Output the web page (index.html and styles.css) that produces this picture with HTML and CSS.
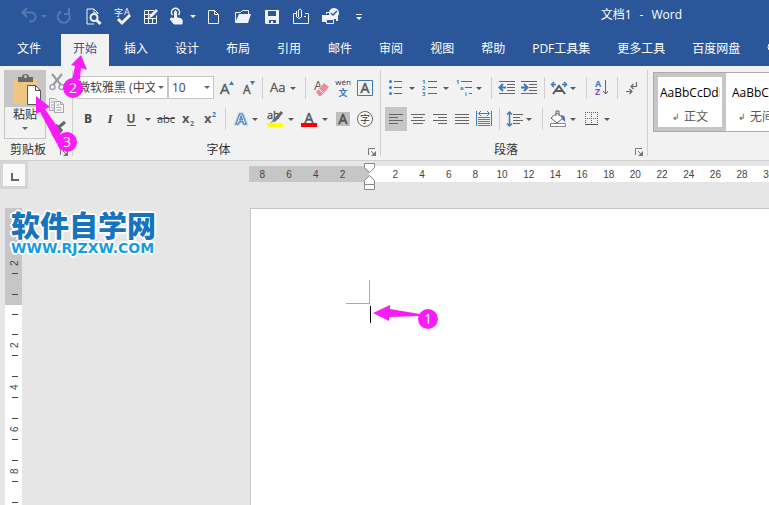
FILE: index.html
```html
<!DOCTYPE html>
<html lang="zh-CN">
<head>
<meta charset="utf-8">
<title>文档1 - Word</title>
<link rel="stylesheet" href="styles.css">
</head>
<body>
<svg class="defs" aria-hidden="true">
  <symbol id="dd" viewBox="0 0 6 3"><path d="M0 0h6L3 3z"/></symbol>
  <symbol id="launch" viewBox="0 0 8 8"><path d="M.5 7V.5H7M3 3l3 3" fill="none" stroke="#777"/><path d="M8 3v5H3z" fill="#777"/></symbol>
</svg>

<header class="titlebar">
  <div class="quick">
    <button class="qb split dim" aria-label="撤消"><svg viewBox="0 0 36 24"><path d="M13 3 8.500 7.500l4.500 4.500M9 7.500h8c6 0 6 9 0 9h-2" fill="none" stroke="currentColor" stroke-width="2"/><path d="M27 10h6l-3 3z" fill="currentColor"/></svg></button>
    <button class="qb dim" aria-label="恢复"><svg viewBox="0 0 28 24"><path d="M11 6.500a6 6 0 1 0 7 1M19 3v6h-5" fill="none" stroke="currentColor" stroke-width="2"/></svg></button>
    <button class="qb" aria-label="打印预览"><svg viewBox="0 0 28 24"><path d="M19 9V8l-4-4H8v15h7M15 4v4h4" fill="none" stroke="currentColor"/><circle cx="15" cy="12.500" r="3.500" fill="none" stroke="currentColor" stroke-width="2"/><path d="m17.500 15 4 4" stroke="currentColor" stroke-width="3"/></svg></button>
    <button class="qb" aria-label="拼写和语法"><svg viewBox="0 0 28 24"><text x="6" y="11" font-size="9">字</text><text x="16" y="10" font-size="9">A</text><path d="m10 14 4 4 8-8" fill="none" stroke="currentColor" stroke-width="3"/></svg></button>
    <button class="qb" aria-label="绘制表格"><svg viewBox="0 0 28 24"><path d="M17 5.500H7.500v13h12v-8M8 9.500h6M8 13.500h11M11.500 6v12M15.500 14v4" fill="none" stroke="currentColor"/><path d="m12 13 1-3 6-6 2 2-6 6z" fill="currentColor"/></svg></button>
    <button class="qb split2" aria-label="触摸模式"><svg viewBox="0 0 36 24"><path d="M6.500 10a4 4 0 1 1 6 0" fill="none" stroke="currentColor" stroke-width="1.500"/><path d="M8.500 6.500q1-1.500 2 0v6l5 1.500q1 0 .5 5h-8l-4-5q1-2 4.500 0z" fill="currentColor" stroke="currentColor"/><path d="M24 10h6l-3 3z" fill="currentColor"/></svg></button>
    <button class="qb" aria-label="新建"><svg viewBox="0 0 28 24"><path d="M8.500 5.500h6l4 4v9h-10zM14.500 5.500v4h4" fill="none" stroke="currentColor"/></svg></button>
    <button class="qb" aria-label="打开"><svg viewBox="0 0 28 24"><path d="M6.500 17V7.500h5l2-2h6V9" fill="none" stroke="currentColor"/><path d="M10 9h12l-3 9H6z" fill="currentColor"/></svg></button>
    <button class="qb" aria-label="保存"><svg viewBox="0 0 28 24"><path d="M7 5h14v14H8l-1-1zm3 1v5h8V6zm1 9v3h2v-2h2v2h3v-3z" fill="currentColor" fill-rule="evenodd"/></svg></button>
    <button class="qb" aria-label="附件"><svg viewBox="0 0 28 24"><path d="M9 8.500H6.500v10h15v-10H18M17 11.500h2" fill="none" stroke="currentColor"/><path d="M9.500 6v6q2.500 3 5 0V5q-1.500-2-3 0v7" fill="none" stroke="currentColor"/></svg></button>
    <button class="qb" aria-label="快速打印"><svg viewBox="0 0 28 24"><path d="M6 10h16v6h-2v-2H10v3H6z" fill="currentColor"/><path d="M10.500 9V7.500H13M10.500 14.500h7v4h-7z" fill="#2b579a" stroke="currentColor"/><circle cx="18" cy="8" r="5" fill="currentColor"/><path d="m15 8 2 2 4-4" fill="none" stroke="#2b579a" stroke-width="1.500"/></svg></button>
    <button class="qb" aria-label="自定义快速访问工具栏"><svg viewBox="0 0 28 24"><path d="M11 9h6v1h-6zM11 12h6l-3 3z" fill="currentColor"/></svg></button>
  </div>
  <h1 class="doc-title"><span>文档1</span><span>-</span><span>Word</span></h1>
</header>

<nav class="tabs">
  <a class="tab file" href="#file">文件</a>
  <a class="tab active" href="#home">开始</a>
  <a class="tab" href="#insert">插入</a>
  <a class="tab" href="#design">设计</a>
  <a class="tab" href="#layout">布局</a>
  <a class="tab" href="#references">引用</a>
  <a class="tab" href="#mail">邮件</a>
  <a class="tab" href="#review">审阅</a>
  <a class="tab" href="#view">视图</a>
  <a class="tab" href="#help">帮助</a>
  <a class="tab" href="#pdf">PDF工具集</a>
  <a class="tab" href="#more">更多工具</a>
  <a class="tab" href="#netdisk">百度网盘</a>
  <a class="tab" href="#tell" aria-label="操作说明搜索"><svg class="bulb" viewBox="0 0 10 14"><circle cx="5" cy="5" r="4" fill="none" stroke="#fff"/><path d="M3 10.500h4M3 12.500h4" stroke="#fff"/></svg></a>
</nav>

<section class="ribbon">
  <div class="group clipboard">
    <div class="clip-body">
      <button class="paste">
        <svg class="paste-icon" viewBox="0 0 40 36"><path d="M8 8h24v25H8z" fill="#eec67e"/><path d="M13 6h4q0-3 3.500-3T24 6h4v5H13z" fill="#6a6a6a"/><circle cx="20.500" cy="5.500" r="1.500" fill="#c6c6c6"/><path d="M22.500 14.500h8l5 5v14h-13z" fill="#fff" stroke="#555"/><path d="M30.500 14.500v5h5" fill="none" stroke="#555"/></svg>
        <span class="paste-label">粘贴<svg class="arrow" viewBox="0 0 6 3"><use href="#dd"/></svg></span>
      </button>
      <div class="clip-tools">
        <button class="tool" aria-label="剪切"><svg viewBox="0 0 22 24"><path d="m6 4 9 11M16 4 7 15" stroke="#999" stroke-width="2"/><circle cx="6.500" cy="17" r="2.500" fill="none" stroke="#a5a5b5" stroke-width="1.500"/><circle cx="15.500" cy="17" r="2.500" fill="none" stroke="#a5a5b5" stroke-width="1.500"/></svg></button>
        <button class="tool" aria-label="复制"><svg viewBox="0 0 22 24"><path d="M8 16.500H3.500v-12H9l2 2M5 8h3M5 11h3M5 14h3" fill="none" stroke="#a5a5ab"/><path d="M8.500 7.500h6l3 3v8h-9zM14.500 7.500v3h3M10.500 11h3M10.500 13.500h5M10.500 16h5" fill="#f6f6f6" stroke="#a5a5ab"/></svg></button>
        <button class="tool" aria-label="格式刷"><svg viewBox="0 0 22 24"><path d="m10 9 5 5-6 7-4-4z" fill="#eec67e"/><path d="m8 8 3-2 6 6-2 3z" fill="#666"/><path d="m13 9 6-5" stroke="#666" stroke-width="3"/></svg></button>
      </div>
    </div>
    <div class="caption"><span>剪贴板</span><button class="launcher" aria-label="剪贴板设置"><svg viewBox="0 0 8 8"><use href="#launch"/></svg></button></div>
  </div>

  <div class="group font">
    <div class="row">
      <label class="combo family"><select aria-label="字体"><option>微软雅黑 (中文正文)</option></select><svg class="arrow" viewBox="0 0 6 3"><use href="#dd"/></svg></label>
      <label class="combo size"><select aria-label="字号"><option>10</option></select><svg class="arrow" viewBox="0 0 6 3"><use href="#dd"/></svg></label>
      <button class="tool" aria-label="增大字号"><svg viewBox="0 0 22 24"><text x="6" y="18" font-size="15" stroke="#595959" stroke-width=".4">A</text><path d="M15 9h5l-2.500-4z" fill="#3d7ab8"/></svg></button>
      <button class="tool" aria-label="减小字号"><svg viewBox="0 0 22 24"><text x="7" y="18" font-size="12" stroke="#595959" stroke-width=".4">A</text><path d="M14 5h5l-2.500 4z" fill="#3d7ab8"/></svg></button>
      <i class="sep"></i>
      <button class="tool split" aria-label="更改大小写"><svg viewBox="0 0 34 24"><text x="3" y="16" font-size="13" stroke="#595959" stroke-width=".3">Aa</text><use href="#dd" x="23" y="11" width="6" height="3"/></svg></button>
      <i class="sep"></i>
      <button class="tool" aria-label="清除格式"><svg viewBox="0 0 22 24"><text x="4" y="14" font-size="13">A</text><path d="m6 15 8-9 5 5-7 8H9z" fill="#f2f2f2"/><path d="m6 16 8-9 5 4-8 9H9z" fill="#ea8c9a"/><path d="m9 13 4 4" stroke="#fff"/></svg></button>
      <button class="tool" aria-label="拼音指南"><svg viewBox="0 0 22 24"><text x="11" y="9" font-size="8" text-anchor="middle" fill="#333">wén</text><text x="11" y="20" font-size="9" font-weight="bold" text-anchor="middle" fill="#3d7ab8">文</text></svg></button>
      <button class="tool" aria-label="字符边框"><svg viewBox="0 0 22 24"><path d="M3.500 4.500h15v15h-15z" fill="none" stroke="#3d7ab8" stroke-width="1"/><text x="11" y="17" font-size="14" text-anchor="middle" stroke="#595959" stroke-width=".5">A</text></svg></button>
    </div>
    <div class="row">
      <button class="tool letter bold">B</button>
      <button class="tool letter italic">I</button>
      <button class="tool split" aria-label="下划线"><svg viewBox="0 0 34 24"><text x="10" y="16" font-size="12" font-weight="bold" text-anchor="middle">U</text><path d="M6 18h9v1H6z"/><use href="#dd" x="24" y="11" width="6" height="3"/></svg></button>
      <button class="tool letter strike">abc</button>
      <button class="tool" aria-label="下标"><svg viewBox="0 0 22 24"><text x="5" y="16" font-size="13" font-weight="bold">x</text><text x="13" y="19" font-size="7" font-weight="bold" fill="#3d7ab8">2</text></svg></button>
      <button class="tool" aria-label="上标"><svg viewBox="0 0 22 24"><text x="5" y="16" font-size="13" font-weight="bold">x</text><text x="13" y="10" font-size="7" font-weight="bold" fill="#3d7ab8">2</text></svg></button>
      <i class="sep"></i>
      <button class="tool split" aria-label="文本效果"><svg viewBox="0 0 34 24"><text x="11" y="17" font-size="15" font-weight="bold" text-anchor="middle" fill="#fff" stroke="#b9d3ee" stroke-width="3">A</text><text x="11" y="17" font-size="15" font-weight="bold" text-anchor="middle" fill="#fff" stroke="#3d7ab8">A</text><use href="#dd" x="22" y="11" width="6" height="3"/></svg></button>
      <button class="tool split" aria-label="突出显示"><svg viewBox="0 0 34 24"><text x="3" y="12" font-size="11" stroke="#444" stroke-width=".3">ab</text><path d="m10 14 8-9" stroke="#666" stroke-width="3"/><path d="m6 16 4-4 2 2z" fill="#777"/><path d="M3 16h16v4H3z" fill="#ff0"/><use href="#dd" x="24" y="11" width="6" height="3"/></svg></button>
      <button class="tool split" aria-label="字体颜色"><svg viewBox="0 0 34 24"><text x="11" y="16" font-size="14" text-anchor="middle" stroke="#595959" stroke-width=".5">A</text><path d="M3 16h16v4H3z" fill="#f00"/><use href="#dd" x="24" y="11" width="6" height="3"/></svg></button>
      <button class="tool" aria-label="字符底纹"><svg viewBox="0 0 22 24"><path d="M4 5h14v14H4z" fill="#bdbdbd"/><text x="11" y="17" font-size="14" text-anchor="middle" stroke="#444" stroke-width=".5">A</text></svg></button>
      <button class="tool" aria-label="带圈字符"><svg viewBox="0 0 22 24"><circle cx="11" cy="12" r="7.500" fill="#fff" stroke="#666"/><text x="11" y="16" font-size="10" text-anchor="middle" fill="#333">字</text></svg></button>
    </div>
    <div class="caption"><span>字体</span><button class="launcher" aria-label="字体设置"><svg viewBox="0 0 8 8"><use href="#launch"/></svg></button></div>
  </div>

  <div class="group paragraph">
    <div class="row">
      <button class="tool split" aria-label="项目符号"><svg viewBox="0 0 34 24"><path d="M9 5.500h8M9 11.500h8M9 17.500h8" stroke="#666"/><g fill="#3d7ab8"><circle cx="5.500" cy="5.500" r="1.500"/><circle cx="5.500" cy="11.500" r="1.500"/><circle cx="5.500" cy="17.500" r="1.500"/></g><use href="#dd" x="24" y="11" width="6" height="3"/></svg></button>
      <button class="tool split" aria-label="编号"><svg viewBox="0 0 34 24"><path d="M9 5.500h9M9 11.500h9M9 17.500h9" stroke="#666"/><g fill="#3d7ab8" font-size="6" font-weight="bold"><text x="3" y="8">1</text><text x="3" y="14">2</text><text x="3" y="20">3</text></g><use href="#dd" x="24" y="11" width="6" height="3"/></svg></button>
      <button class="tool split" aria-label="多级列表"><svg viewBox="0 0 34 24"><path d="M8 5.500h11M12 11.500h7M16 17.500h3" stroke="#666"/><g fill="#3d7ab8" font-size="6" font-weight="bold"><text x="3" y="8">1</text><text x="7" y="14">a</text><text x="12" y="20">i</text></g><use href="#dd" x="23" y="11" width="6" height="3"/></svg></button>
      <i class="sep"></i>
      <button class="tool" aria-label="减少缩进量"><svg viewBox="0 0 22 24"><path d="M3 5.500h16M11 8.500h8M11 11.500h8M11 14.500h8M3 17.500h16" stroke="#666"/><path d="M10 11.500H4M7 8l-3.500 3.500L7 15" fill="none" stroke="#3d7ab8" stroke-width="2"/></svg></button>
      <button class="tool" aria-label="增加缩进量"><svg viewBox="0 0 22 24"><path d="M3 5.500h16M11 8.500h8M11 11.500h8M11 14.500h8M3 17.500h16" stroke="#666"/><path d="M3 11.500h6M6 8l3.500 3.500L6 15" fill="none" stroke="#3d7ab8" stroke-width="2"/></svg></button>
      <i class="sep"></i>
      <button class="tool split" aria-label="中文版式"><svg viewBox="0 0 34 24"><path d="m5 18 6-8 6 8M7.500 15h7" fill="none" stroke="#595959" stroke-width="2"/><path d="M8 8.500H4M6 6 3.500 8.500 6 11M14 8.500h4M16 6l2.500 2.500L16 11" fill="none" stroke="#3d7ab8" stroke-width="1.500"/><use href="#dd" x="22" y="11" width="6" height="3"/></svg></button>
      <i class="sep"></i>
      <button class="tool" aria-label="排序"><svg viewBox="0 0 22 24"><text x="4" y="11" font-size="9" font-weight="bold" fill="#3d7ab8">A</text><text x="4" y="19" font-size="9" font-weight="bold" fill="#8e4fb5">Z</text><path d="M14.500 4v14M12 15l2.500 3 2.500-3" fill="none" stroke="#666"/></svg></button>
      <i class="sep"></i>
      <button class="tool" aria-label="显示编辑标记"><svg viewBox="0 0 22 24"><path d="M15.500 6v4.500H10M12.500 8 10 10.500l2.500 2.500M5 15.500h6M8.500 13l2.500 2.500L8.500 18" fill="none" stroke="#666" stroke-width="1.200"/></svg></button>
    </div>
    <div class="row">
      <button class="tool on" aria-label="左对齐"><svg viewBox="0 0 22 24"><path d="M4 7.500h14M4 10.500h9M4 13.500h14M4 16.500h9" stroke="#666"/></svg></button>
      <button class="tool" aria-label="居中"><svg viewBox="0 0 22 24"><path d="M4 7.500h14M6 10.500h10M4 13.500h14M6 16.500h10" stroke="#666"/></svg></button>
      <button class="tool" aria-label="右对齐"><svg viewBox="0 0 22 24"><path d="M4 7.500h14M9 10.500h9M4 13.500h14M9 16.500h9" stroke="#666"/></svg></button>
      <button class="tool" aria-label="两端对齐"><svg viewBox="0 0 22 24"><path d="M4 7.500h14M4 10.500h14M4 13.500h14M4 16.500h14" stroke="#666"/></svg></button>
      <button class="tool" aria-label="分散对齐"><svg viewBox="0 0 22 24"><path d="M5 10.500h12M5 12.500h12M5 14.500h12M5 16.500h12M5 18.500h12" stroke="#777"/><path d="M3.500 4v15M18.500 4v15M6 6.500h10M8 4 5.500 6.500 8 9M14 4l2.500 2.500L14 9" fill="none" stroke="#3d7ab8"/></svg></button>
      <i class="sep"></i>
      <button class="tool split" aria-label="行距"><svg viewBox="0 0 34 24"><path d="M9 7.500h10M9 10.500h7M9 13.500h10M9 16.500h7" stroke="#666"/><path d="M5.500 5v14M3 7.500 5.500 5 8 7.500M3 16.500 5.500 19 8 16.500" fill="none" stroke="#3d7ab8" stroke-width="1.500"/><use href="#dd" x="22" y="11" width="6" height="3"/></svg></button>
      <i class="sep"></i>
      <button class="tool split" aria-label="底纹"><svg viewBox="0 0 34 24"><path d="m10 6 6 5-6 5-6-5z" fill="#fff" stroke="#666"/><path d="M9 9V4h3v5" fill="none" stroke="#666"/><path d="M14 8q5 0 4 7l-3-3z" fill="#3d7ab8"/><path d="M3.500 16.500h15v3h-15z" fill="#fff" stroke="#888"/><use href="#dd" x="23" y="11" width="6" height="3"/></svg></button>
      <button class="tool split" aria-label="边框"><svg viewBox="0 0 34 24"><path d="M4 5.500h13M4 11.500h13M4.500 5v12M10.500 5v12M16.500 5v12" stroke="#666" stroke-dasharray="1 1"/><path d="M4 17.500h13" stroke="#555"/><use href="#dd" x="23" y="11" width="6" height="3"/></svg></button>
    </div>
    <div class="caption"><span>段落</span><button class="launcher" aria-label="段落设置"><svg viewBox="0 0 8 8"><use href="#launch"/></svg></button></div>
  </div>

  <div class="group styles">
    <div class="gallery">
      <button class="style-card chosen"><span class="sample">AaBbCcDdEe</span><span class="style-name"><small>↲</small>正文</span></button>
      <button class="style-card"><span class="sample">AaBbCcDdEe</span><span class="style-name"><small>↲</small>无间隔</span></button>
    </div>
  </div>
</section>

<main class="workspace">
  <div class="ruler-row">
    <button class="tab-stop" aria-label="制表符"><svg viewBox="0 0 20 20"><path d="M8 8v7h7" fill="none" stroke="#666" stroke-width="2"/></svg></button>
    <div class="ruler">
      <div class="margin-part"><span>8</span><span>6</span><span>4</span><span>2</span></div>
      <div class="text-part">
        <svg class="indent" viewBox="0 0 12 28"><g fill="#fff" stroke="#888"><path d="M.500 .500h10v4L5.500 9.500l-5-5z"/><path d="m5.500 12.500 5 5v4H.500v-4z"/><path d="M.500 21.500h10v5H.500z"/></g></svg>
        <span>2</span><span>4</span><span>6</span><span>8</span><span>10</span><span>12</span><span>14</span><span>16</span><span>18</span><span>20</span><span>22</span><span>24</span><span>26</span><span>28</span><span>30</span>
      </div>
    </div>
  </div>
  <div class="canvas">
    <div class="vruler">
      <div class="vmargin"><div class="unit"><span>2</span></div><div class="half"></div></div>
      <div class="vtext"><div class="half"></div><div class="unit"><span>2</span></div><div class="unit"><span>4</span></div><div class="unit"><span>6</span></div><div class="unit"><span>8</span></div><div class="unit"><span>10</span></div></div>
    </div>
    <article class="page"><div class="corner"></div><div class="caret"></div></article>
  </div>
</main>

<div class="watermark"><strong>软件自学网</strong><span>WWW.RJZXW.COM</span></div>

<div class="note note-two"><svg viewBox="0 0 24 28"><path d="M17 1 7 11l4 1-3 14 8-1 1-11 6 2z"/></svg><b>2</b></div>
<div class="note note-three"><svg viewBox="0 0 30 52"><path d="M1 1v18l4-2 17 32 4-12L10 14l5-2z"/></svg><b>3</b></div>
<div class="note note-one"><svg viewBox="0 0 48 16"><path d="M0 8 17 0v4l30 5v2l-31 1v4z"/></svg><b>1</b></div>
</body>
</html>
```
FILE: styles.css
```css
* { box-sizing: border-box; }

body {
  margin: 0;
  height: 100vh;
  overflow: hidden;
  position: relative;
  display: flex;
  flex-direction: column;
  background: #e6e6e6;
  color: #333;
  font: 12px/16px "Open Sans", "Noto Sans CJK SC", sans-serif;
}

button {
  margin: 0;
  padding: 0;
  border: 0;
  background: none;
  color: inherit;
  font: inherit;
}

svg { display: block; }
.defs { position: absolute; width: 0; height: 0; }

/* title bar */
.titlebar {
  display: flex;
  flex: none;
  align-items: center;
  height: 34px;
  padding: 0 87px 0 14px;
  background: #2b579a;
  color: #fff;
}
.quick { display: flex; color: #f0f4fa; }
.qb { width: 29px; height: 24px; }
.qb.split { width: 36px; }
.qb.split2 { width: 34px; }
.qb svg { height: 24px; fill: currentColor; }
.qb.dim { color: #5578b0; }
.doc-title {
  display: flex;
  gap: 8px;
  margin: 0 0 4px auto;
  font-size: 12px;
  font-weight: normal;
}

/* tab strip */
.tabs {
  display: flex;
  flex: none;
  gap: 3px;
  height: 32px;
  padding-left: 5px;
  background: #2b579a;
  overflow: hidden;
}
.tab {
  flex: none;
  padding: 0 12px;
  color: #fff;
  line-height: 29px;
  text-decoration: none;
}
.tab.file { margin-right: 5px; }
.tab.active { background: #f2f2f2; color: #2b579a; }
.bulb { width: 10px; height: 14px; margin-top: 8px; }

/* ribbon */
.ribbon {
  display: flex;
  flex: none;
  height: 95px;
  border-bottom: 1px solid #d0d0d0;
  background: #f2f2f2;
  color: #595959;
}
.group {
  display: flex;
  flex: none;
  flex-direction: column;
  gap: 7px;
  padding: 6px 4px 0;
  margin: 4px 0;
  border-right: 1px solid #d0d0d0;
}
.group .row { display: flex; }
.clipboard { width: 73px; padding-top: 0; }
.font { width: 308px; }
.paragraph { width: 267px; }
.styles { flex: 1; min-width: 0; padding: 2px 0 0 5px; border: 0; overflow: hidden; }

.clip-body { display: flex; height: 61px; }
.paste {
  display: flex;
  flex: none;
  flex-direction: column;
  width: 42px;
  height: 69px;
  border: 1px solid #c6c6c6;
  color: #333;
}
.paste-icon { width: 40px; height: 36px; background: #c6c6c6; }
.paste-label {
  display: flex;
  flex-direction: column;
  align-items: center;
  gap: 4px;
  width: 40px;
}
.clip-tools { display: flex; flex-direction: column; }
.tool { flex: none; width: 22px; height: 24px; }
.tool.split { width: 34px; }
.tool.on { background: #c6c6c6; }
.tool svg { height: 24px; fill: #595959; }
.arrow { flex: none; width: 6px; height: 3px; fill: #666; }
.letter { text-align: center; font-size: 12px; color: #444; }
.bold { font-weight: bold; }
.italic { font: italic bold 13px "Liberation Serif", serif; }
.strike { font-size: 11px; text-decoration: line-through; }

.sep { width: 1px; height: 22px; margin: 1px 4px; background: #d0d0d0; }

.combo {
  display: flex;
  align-items: center;
  gap: 3px;
  height: 23px;
  padding: 0 3px;
  border: 1px solid #c6c6c6;
  background: #fff;
}
.combo select {
  flex: 1;
  min-width: 0;
  padding: 0;
  border: 0;
  background: none;
  appearance: none;
  color: #444;
  font: 12px/18px "Open Sans", "Noto Sans CJK SC", sans-serif;
}
.family { width: 91px; padding-left: 0; }
.size { width: 47px; }

.caption {
  display: flex;
  align-items: center;
  margin-top: 4px;
  color: #333;
}
.caption span { flex: 1; padding-right: 8px; text-align: center; white-space: nowrap; }
.launcher { width: 8px; height: 8px; margin-top: 4px; }
.launcher svg { width: 8px; height: 8px; }

.gallery {
  display: flex;
  height: 60px;
  border: 1px solid #ababab;
  border-right: 0;
  background: #fff;
}
.style-card {
  display: flex;
  flex: none;
  flex-direction: column;
  gap: 8px;
  width: 72px;
  padding: 8px 2px 0;
  border: 4px solid transparent;
  overflow: hidden;
}
.style-card.chosen { border-color: #c6c6c6; }
.sample {
  width: 100%;
  overflow: hidden;
  color: #000;
  font-size: 12px;
  text-align: left;
  white-space: nowrap;
}
.style-name {
  display: flex;
  align-self: center;
  gap: 4px;
  white-space: nowrap;
}
.style-name small { font-size: 9px; }

/* workspace */
.workspace { display: flex; flex: 1; flex-direction: column; min-height: 0; }
.ruler-row { display: flex; flex: none; height: 47px; }
.tab-stop {
  width: 28px;
  height: 28px;
  padding: 1px;
  border: 3px solid #d6d6d6;
  background: #fafafa;
}
.tab-stop svg { width: 20px; height: 20px; }
.ruler {
  display: flex;
  flex: 1;
  min-width: 0;
  height: 16px;
  margin: 5px 0 0 221px;
  font: 10px/17px "Liberation Sans", sans-serif;
  color: #444;
  text-align: center;
}
.margin-part {
  display: flex;
  flex: none;
  width: 120px;
  padding-right: 13px;
  background: #c6c6c6;
}
.text-part {
  position: relative;
  display: flex;
  flex: 1;
  padding-left: 13px;
  margin-right: -13px;
  background: #fff;
}
.ruler span { flex: 1; }
.indent { position: absolute; left: -5px; top: -3px; width: 12px; height: 28px; }

.canvas { display: flex; flex: 1; min-height: 0; }
.vruler {
  display: flex;
  flex: none;
  flex-direction: column;
  width: 17px;
  margin: 0 228px 0 5px;
  overflow: hidden;
  font: 10px/12px "Liberation Sans", sans-serif;
  color: #444;
}
.vmargin {
  display: flex;
  flex: none;
  flex-direction: column;
  justify-content: flex-end;
  height: 97px;
  background: #c6c6c6;
}
.vtext { flex: 1; background: #fff; }
.unit, .half { flex: none; padding: 9px 4px 9px 7px; }
.unit { height: 42px; }
.half { height: 20px; }
.half::before { content: ""; display: block; height: 1px; background: #444; }
.unit span {
  display: flex;
  align-items: center;
  justify-content: center;
  width: 6px;
  height: 22px;
  border: solid #444;
  border-width: 1px 0;
  writing-mode: vertical-rl;
  transform: rotate(180deg);
}

.page {
  flex: 1;
  padding: 71px 0 0 95px;
  border: solid #c6c6c6;
  border-width: 1px 0 0 1px;
  background: #fff;
}
.corner {
  width: 24px;
  height: 24px;
  border: solid #ababab;
  border-width: 0 1px 1px 0;
}
.caret { width: 1px; height: 17px; margin: 2px 0 0 24px; background: #000; }

/* floating logo */
.watermark {
  position: absolute;
  left: 11px;
  top: 209px;
  display: flex;
  flex-direction: column;
  gap: 3px;
  color: #1673bf;
  text-shadow: 1px 1px #fff, -1px -1px #fff, 1px -1px #fff, -1px 1px #fff, 2px 0 #fff, -2px 0 #fff, 0 2px #fff, 0 -2px #fff;
}
.watermark strong { font: 900 29px/30px "Noto Sans CJK SC", sans-serif; }
.watermark span { color: #159be0; font: bold 14px/12px "DejaVu Sans", sans-serif; }

/* callouts */
.note { position: absolute; fill: #f81cf8; }
.note b {
  position: absolute;
  width: 20px;
  height: 20px;
  border-radius: 50%;
  background: #f81cf8;
  color: #fff;
  font-size: 14px;
  font-weight: normal;
  line-height: 20px;
  text-align: center;
}
.note-two { left: 64px; top: 54px; width: 24px; height: 28px; }
.note-two b { left: -1px; top: 24px; }
.note-three { left: 35px; top: 95px; width: 30px; height: 52px; }
.note-three b { left: 22px; top: 37px; }
.note-one { left: 373px; top: 305px; width: 48px; height: 16px; }
.note-one b { left: 45px; top: 4px; }
```
